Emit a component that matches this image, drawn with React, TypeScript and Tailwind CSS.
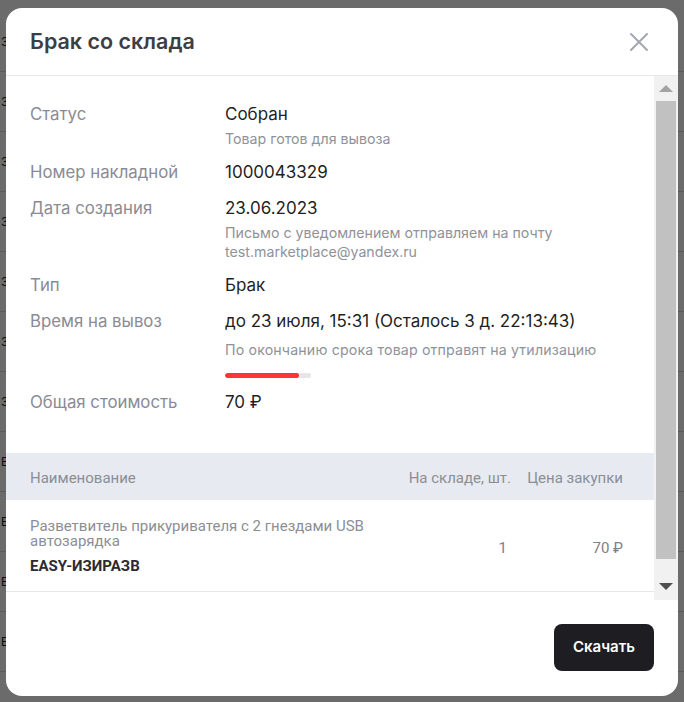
import React from "react";

const bgRows = ["З", "З", "З", "З", "З", "З", "З", "Е", "Е", "Е", "Е"];

const details: { label: string; value: string; sub?: string }[] = [
  { label: "Статус", value: "Собран", sub: "Товар готов для вывоза" },
  { label: "Номер накладной", value: "1000043329" },
  {
    label: "Дата создания",
    value: "23.06.2023",
    sub: "Письмо с уведомлением отправляем на почту test.marketplace@yandex.ru",
  },
  { label: "Тип", value: "Брак" },
];

const inter = { fontFamily: "Inter, 'Noto Sans', sans-serif" };

function CloseIcon() {
  return (
    <svg width="20" height="20" viewBox="0 0 20 20" fill="none">
      <path d="M2 2L18 18M18 2L2 18" stroke="#a3a7b0" strokeWidth="2" strokeLinecap="round" />
    </svg>
  );
}

function FakeScrollbar() {
  return (
    <div className="w-[24px] shrink-0 bg-[#f1f1f1] flex flex-col">
      <div className="h-[25px] flex items-center justify-center">
        <div className="w-0 h-0 border-l-[7px] border-r-[7px] border-b-[7px] border-l-transparent border-r-transparent border-b-[#a3a3a3]" />
      </div>
      <div className="h-[458px] mx-[2px] bg-[#c1c1c1]" />
      <div className="flex-1 flex items-end justify-center pb-[10px]">
        <div className="w-0 h-0 border-l-[7px] border-r-[7px] border-t-[7px] border-l-transparent border-r-transparent border-t-[#505050]" />
      </div>
    </div>
  );
}

export default function App() {
  return (
    <div className="relative w-[684px] h-[702px] overflow-hidden bg-white" style={inter}>
      {/* page behind the modal */}
      <div className="flex flex-col pt-[12px]">
        {bgRows.map((ch, i) => (
          <div key={i} className="h-[60px] border-b border-[#d8d8d8] flex items-center pl-[1px] text-[12px] text-[#222]">
            {ch}
          </div>
        ))}
      </div>

      {/* overlay */}
      <div className="absolute inset-0 bg-[rgba(0,0,0,0.58)] flex justify-center pt-[8px]">
        <div className="w-[672px] h-[688px] bg-white rounded-2xl flex flex-col overflow-hidden">
          {/* header */}
          <div className="h-[68px] shrink-0 border-b border-[#e5e7eb] flex items-center justify-between pl-6 pr-[29px]">
            <h2 className="text-[21.5px] font-semibold text-[#3d3d44]">Брак со склада</h2>
            <CloseIcon />
          </div>

          {/* body */}
          <div className="h-[524px] shrink-0 flex">
            <div className="flex-1 overflow-hidden">
              <div className="px-6 pt-[26px] flex flex-col gap-[12px]">
                {details.map((d) => (
                  <div key={d.label} className="grid grid-cols-[195px_1fr]">
                    <div className="text-[16.8px] leading-[24px] text-[#8a8b94]">{d.label}</div>
                    <div>
                      <div className="text-[17px] leading-[24px] text-[#1f1f24]">{d.value}</div>
                      {d.sub && (
                        <div className="mt-[3px] text-[14.2px] leading-[19px] text-[#8f929a] max-w-[380px]">{d.sub}</div>
                      )}
                    </div>
                  </div>
                ))}

                <div className="grid grid-cols-[195px_1fr]">
                  <div className="text-[16.8px] leading-[24px] text-[#8a8b94]">Время на вывоз</div>
                  <div>
                    <div className="text-[17px] leading-[24px] text-[#1f1f24]">
                      до 23 июля, 15:31 (Осталось 3 д. 22:13:43)
                    </div>
                    <div className="mt-[7px] text-[14.2px] leading-[19px] text-[#8f929a] tracking-[0.15px]">
                      По окончанию срока товар отправят на утилизацию
                    </div>
                    <div className="mt-[14px] w-[86px] h-[5px] rounded-full bg-[#e6e6e6] overflow-hidden">
                      <div className="h-full rounded-full bg-[#ff3338]" style={{ width: "86%" }} />
                    </div>
                  </div>
                </div>

                <div className="grid grid-cols-[195px_1fr]">
                  <div className="text-[16.8px] leading-[24px] text-[#8a8b94]">Общая стоимость</div>
                  <div className="text-[17px] leading-[24px] text-[#1f1f24]">70 ₽</div>
                </div>
              </div>

              {/* table */}
              <div className="mt-[39px]" style={{ fontFamily: "Roboto, 'Noto Sans', sans-serif" }}>
                <div className="h-[47px] bg-[#e7eaf0] flex items-center pt-[3px] pl-6 pr-[31px] gap-4 text-[15px] text-[#8b8e96]">
                  <div className="flex-1">Наименование</div>
                  <div className="w-[110px] text-right">На складе, шт.</div>
                  <div className="w-[96px] text-right">Цена закупки</div>
                </div>
                <div className="h-[92px] border-b border-[#e5e7eb] flex items-start pt-[19px] pl-6 pr-[31px] gap-4">
                  <div className="flex-1 pr-4">
                    <div className="text-[15px] leading-[15px] text-[#8b8e96] max-w-[350px]">
                      Разветвитель прикуривателя с 2 гнездами USB автозарядка
                    </div>
                    <div className="mt-[9px] text-[15px] leading-[16px] font-bold text-[#2b2b30]">EASY-ИЗИРАЗВ</div>
                  </div>
                  <div className="mt-[18px] w-[110px] text-right pr-[4px] text-[15px] text-[#7d8088]">1</div>
                  <div className="mt-[18px] w-[96px] text-right text-[15px] text-[#7d8088]">70 ₽</div>
                </div>
              </div>
            </div>
            <FakeScrollbar />
          </div>

          {/* footer */}
          <div className="flex-1 flex justify-end items-start pt-[24px] pr-6">
            <button className="w-[100px] h-[47px] rounded-lg bg-[#1d1d22] text-white text-[15px] font-semibold">
              Скачать
            </button>
          </div>
        </div>
      </div>
    </div>
  );
}
